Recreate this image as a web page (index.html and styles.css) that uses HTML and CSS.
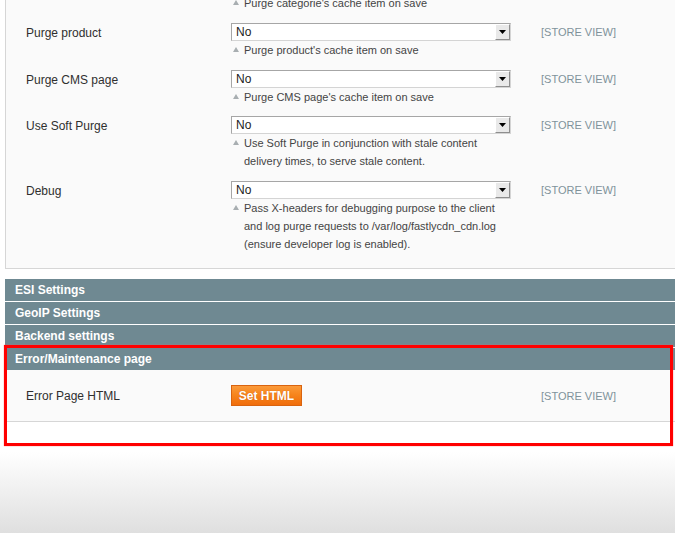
FILE: index.html
```html
<!DOCTYPE html>
<html>
<head>
<meta charset="utf-8">
<link rel="stylesheet" href="styles.css">
</head>
<body>
<div class="page">
  <div class="fieldset">
    <div class="row">
      <div class="label"></div>
      <div class="value">
        <div class="hint"><svg class="tri" width="6" height="5" viewBox="0 0 6 5"><path d="M3 0L6 5H0Z"/></svg><span>Purge categorie's cache item on save</span></div>
      </div>
      <div class="scope"></div>
    </div>
    <div class="row">
      <div class="label">Purge product</div>
      <div class="value">
        <div class="select"><span class="sel-text">No</span><span class="sel-btn"><svg width="7" height="4" viewBox="0 0 7 4"><path d="M0 0H7L3.5 4Z"/></svg></span></div>
        <div class="hint"><svg class="tri" width="6" height="5" viewBox="0 0 6 5"><path d="M3 0L6 5H0Z"/></svg><span>Purge product's cache item on save</span></div>
      </div>
      <div class="scope">[STORE VIEW]</div>
    </div>
    <div class="row">
      <div class="label">Purge CMS page</div>
      <div class="value">
        <div class="select"><span class="sel-text">No</span><span class="sel-btn"><svg width="7" height="4" viewBox="0 0 7 4"><path d="M0 0H7L3.5 4Z"/></svg></span></div>
        <div class="hint"><svg class="tri" width="6" height="5" viewBox="0 0 6 5"><path d="M3 0L6 5H0Z"/></svg><span>Purge CMS page's cache item on save</span></div>
      </div>
      <div class="scope">[STORE VIEW]</div>
    </div>
    <div class="row tight">
      <div class="label">Use Soft Purge</div>
      <div class="value">
        <div class="select"><span class="sel-text">No</span><span class="sel-btn"><svg width="7" height="4" viewBox="0 0 7 4"><path d="M0 0H7L3.5 4Z"/></svg></span></div>
        <div class="hint"><svg class="tri" width="6" height="5" viewBox="0 0 6 5"><path d="M3 0L6 5H0Z"/></svg><span>Use Soft Purge in conjunction with stale content<br>delivery times, to serve stale content.</span></div>
      </div>
      <div class="scope">[STORE VIEW]</div>
    </div>
    <div class="row">
      <div class="label">Debug</div>
      <div class="value">
        <div class="select"><span class="sel-text">No</span><span class="sel-btn"><svg width="7" height="4" viewBox="0 0 7 4"><path d="M0 0H7L3.5 4Z"/></svg></span></div>
        <div class="hint"><svg class="tri" width="6" height="5" viewBox="0 0 6 5"><path d="M3 0L6 5H0Z"/></svg><span>Pass X-headers for debugging purpose to the client<br>and log purge requests to /var/log/fastlycdn_cdn.log<br>(ensure developer log is enabled).</span></div>
      </div>
      <div class="scope">[STORE VIEW]</div>
    </div>
  </div>

  <div class="sections">
    <div class="section-head">ESI Settings</div>
    <div class="section-head">GeoIP Settings</div>
    <div class="section-head">Backend settings</div>
    <div class="section highlighted">
      <div class="section-head">Error/Maintenance page</div>
      <div class="section-body">
        <div class="row center">
          <div class="label">Error Page HTML</div>
          <div class="value"><button class="btn">Set HTML</button></div>
          <div class="scope">[STORE VIEW]</div>
        </div>
      </div>
    </div>
  </div>
</div>
</body>
</html>
```

FILE: styles.css
```css
* { box-sizing: border-box; }

html, body {
  margin: 0;
  padding: 0;
}

body {
  font-family: "Liberation Sans", Arial, sans-serif;
  color: #2f2f2f;
  background: #fff;
}

.page {
  height: 533px;
  overflow: hidden;
  background: linear-gradient(to bottom, #ffffff 0, #ffffff 452px, #dfdfdf 533px);
}

.fieldset {
  margin-top: -6px;
  margin-left: 5px;
  background: #fafafa;
  border-left: 1px solid #d6d6d6;
  border-bottom: 1px solid #d6d6d6;
  padding: 0 0 15px 20px;
  display: flex;
  flex-direction: column;
  gap: 11px;
}

.row {
  display: grid;
  grid-template-columns: 175px 280px 1fr;
  column-gap: 30px;
  align-items: start;
}

.row.tight {
  margin-top: -1px;
}

.row.center {
  align-items: center;
}

.label {
  font-size: 12px;
  line-height: 18px;
  padding-top: 1px;
  color: #2f2f2f;
}

.row.center .label {
  padding-top: 0;
}

.scope {
  font-size: 11px;
  line-height: 18px;
  color: #7f929b;
}

.select {
  height: 18px;
  display: flex;
  align-items: stretch;
  background: #fff;
  border: 1px solid #a6a6a6;
  border-bottom-color: #d4d4d4;
  border-right-color: #d4d4d4;
}

.sel-text {
  flex: 1;
  font-size: 12px;
  line-height: 16px;
  padding-left: 4px;
  color: #222;
}

.sel-btn {
  width: 15px;
  background: #e9e9e9;
  border-left: 1px solid #fff;
  border-top: 1px solid #fff;
  border-right: 1px solid #8e8e8e;
  border-bottom: 1px solid #8e8e8e;
  display: flex;
  align-items: center;
  justify-content: center;
}

.sel-btn svg path {
  fill: #000;
}

.hint {
  display: flex;
  align-items: flex-start;
  font-size: 11px;
  line-height: 18px;
  color: #444;
}

.hint .tri {
  flex: none;
  margin: 6px 5px 0 2px;
}

.hint .tri path {
  fill: #a8aeb1;
}

.sections {
  margin-top: 10px;
  margin-left: 5px;
  display: flex;
  flex-direction: column;
  gap: 1px;
}

.section-head {
  height: 22px;
  line-height: 22px;
  background: #6f8992;
  color: #fff;
  font-weight: bold;
  font-size: 12px;
  padding-left: 10px;
}

.section {
  position: relative;
}

.section-body {
  background: #fafafa;
  border-left: 1px solid #d6d6d6;
  border-bottom: 1px solid #d6d6d6;
  padding: 15px 0 15px 20px;
}

.btn {
  width: 71px;
  height: 21px;
  padding: 0;
  border: 1px solid #d9630f;
  background: linear-gradient(to bottom, #fb9a3a 0%, #f7851d 45%, #f06d0b 100%);
  color: #fff;
  font-family: "Liberation Sans", Arial, sans-serif;
  font-weight: bold;
  font-size: 12px;
  text-shadow: 0 0 1px #c85a0a;
  display: block;
}

.highlighted::after {
  content: "";
  position: absolute;
  top: -3px;
  left: -1px;
  right: 2px;
  bottom: -24px;
  border: 3px solid #ff0000;
  box-shadow: 0 0 1px #ff6060;
  pointer-events: none;
}
```
